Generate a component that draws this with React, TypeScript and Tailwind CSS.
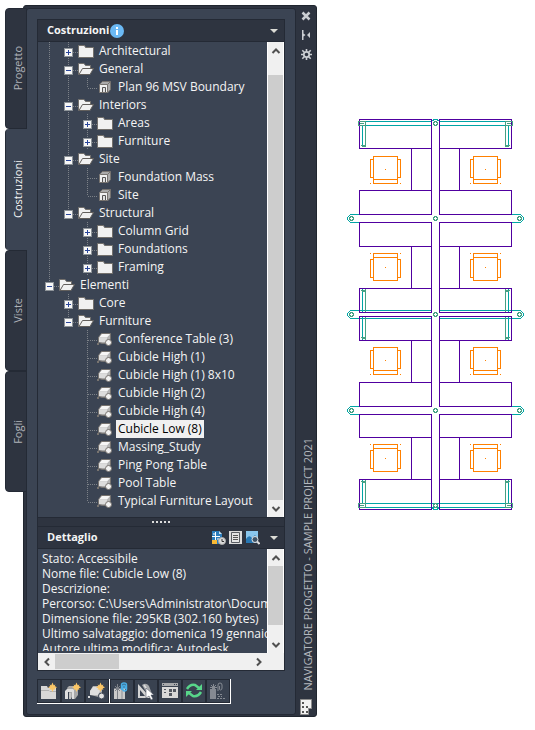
import React from "react";

type Kind = "closed" | "open" | "construct" | "element";
type Gutter = "v" | "+" | "-" | "t" | "l" | " " | "=";

interface RowData {
  gutter: Gutter[];
  kind: Kind;
  label: string;
  selected?: boolean;
}

/* gutter codes: v line, t branch, l last branch, + / - expander on a line, = last open expander */
const rows: RowData[] = [
  { gutter: ["v", "+"], kind: "closed", label: "Architectural" },
  { gutter: ["v", "-"], kind: "open", label: "General" },
  { gutter: ["v", "v", "l"], kind: "construct", label: "Plan 96 MSV Boundary" },
  { gutter: ["v", "-"], kind: "open", label: "Interiors" },
  { gutter: ["v", "v", "+"], kind: "closed", label: "Areas" },
  { gutter: ["v", "v", "+"], kind: "closed", label: "Furniture" },
  { gutter: ["v", "-"], kind: "open", label: "Site" },
  { gutter: ["v", "v", "t"], kind: "construct", label: "Foundation Mass" },
  { gutter: ["v", "v", "l"], kind: "construct", label: "Site" },
  { gutter: ["v", "="], kind: "open", label: "Structural" },
  { gutter: ["v", " ", "+"], kind: "closed", label: "Column Grid" },
  { gutter: ["v", " ", "+"], kind: "closed", label: "Foundations" },
  { gutter: ["v", " ", "+"], kind: "closed", label: "Framing" },
  { gutter: ["="], kind: "open", label: "Elementi" },
  { gutter: [" ", "+"], kind: "closed", label: "Core" },
  { gutter: [" ", "="], kind: "open", label: "Furniture" },
  { gutter: [" ", " ", "t"], kind: "element", label: "Conference Table (3)" },
  { gutter: [" ", " ", "t"], kind: "element", label: "Cubicle High (1)" },
  { gutter: [" ", " ", "t"], kind: "element", label: "Cubicle High (1) 8x10" },
  { gutter: [" ", " ", "t"], kind: "element", label: "Cubicle High (2)" },
  { gutter: [" ", " ", "t"], kind: "element", label: "Cubicle High (4)" },
  { gutter: [" ", " ", "t"], kind: "element", label: "Cubicle Low (8)", selected: true },
  { gutter: [" ", " ", "t"], kind: "element", label: "Massing_Study" },
  { gutter: [" ", " ", "t"], kind: "element", label: "Ping Pong Table" },
  { gutter: [" ", " ", "t"], kind: "element", label: "Pool Table" },
  { gutter: [" ", " ", "l"], kind: "element", label: "Typical Furniture Layout" },
];

function GutterCell({ code, label }: { code: Gutter; label: string }) {
  const down = code === "v" || code === "t" || code === "+" || code === "-";
  const up = down || code === "l" || code === "=";
  const across = code !== "v" && code !== " ";
  const box = code === "+" || code === "-" || code === "=";
  const art = (
    <svg width="19" height="18" viewBox="0 0 19 18" className="block" aria-hidden="true" shapeRendering="crispEdges">
      <g stroke="#7d8288" strokeDasharray="1 1">
        {up && <path d="M9.5 0V10" />}
        {down && <path d="M9.5 10V18" />}
        {across && <path d="M10 10.5H19" />}
      </g>
      {box && (
        <g>
          <rect x="5" y="6" width="9" height="9" fill="#8e9499" />
          <rect x="6" y="7" width="7" height="7" fill="#f7f7f7" />
          <path d="M7 10.5H12" stroke="#2a4699" />
          {code === "+" && <path d="M9.5 8V13" stroke="#2a4699" />}
        </g>
      )}
    </svg>
  );
  return box ? (
    <button type="button" aria-label={"Espandi o comprimi " + label} className="shrink-0">{art}</button>
  ) : (
    <span className="shrink-0">{art}</span>
  );
}

function NodeIcon({ kind }: { kind: Kind }) {
  return (
    <svg width="18" height="18" viewBox="0 0 18 18" className="block shrink-0" aria-hidden="true">
      {kind === "closed" && (
        <path d="M0.500 3.500H6.500L7.500 5.500H15.500V15.500H0.500Z" fill="#f1f1f1" stroke="#73706c" />
      )}
      {kind === "open" && (
        <>
          <path d="M0.500 14.500V3.500H6L7.500 5.500H12.500V9" fill="#f1f1f1" stroke="#73706c" />
          <path d="M1 14.500L4.500 8.500H15.500L12 14.500Z" fill="#f1f1f1" stroke="#625f5c" />
        </>
      )}
      {kind === "construct" && (
        <>
          <path d="M2.500 6.500L5.500 3.500H13.500V11.500L11 14.500Z" fill="#aaa" stroke="#77736f" />
          <path d="M2.500 14.500V7.500Q2.500 6.500 3.500 6.500H10.500V14.500Z" fill="#f0f0f0" stroke="#77736f" />
          <path d="M5.500 14V9.500H8.500V14" fill="#e2e2e2" stroke="#555" />
          <path d="M10.500 6.500L13.500 3.500" stroke="#77736f" />
        </>
      )}
      {kind === "element" && (
        <>
          <path d="M1.500 12.500V7.500L4.500 3.500H13.500V9L10 13Q6 14 1.500 12.500Z" fill="#b5b5b5" stroke="#77736f" />
          <path d="M2 7.500L5 4H13L10 7.500Z" fill="#f6f6f6" />
          <path d="M2 8H10V12H2Z" fill="#dcdcdc" />
          <circle cx="11.500" cy="12.500" r="3" fill="#f2f2f2" stroke="#77736f" />
          <path d="M0 13H2V15H0Z" fill="#77736f" />
        </>
      )}
    </svg>
  );
}

function Chevron({ dir }: { dir: "up" | "down" | "left" | "right" }) {
  const d = {
    up: "M1.500 7L5 3.500L8.500 7",
    down: "M1.500 3L5 6.500L8.500 3",
    left: "M7 1.500L3.500 5L7 8.500",
    right: "M3 1.500L6.500 5L3 8.500",
  }[dir];
  return (
    <svg width="10" height="10" viewBox="0 0 10 10" aria-hidden="true">
      <path d={d} fill="none" stroke="#505050" strokeWidth="2" />
    </svg>
  );
}

function VScroll({ name, children }: { name: string; children: React.ReactNode }) {
  return (
    <div className="flex w-[17px] shrink-0 flex-col border-x border-white bg-[#f0f0f0]">
      <button type="button" aria-label={name + " su"} className="flex h-[17px] shrink-0 items-center justify-center">
        <Chevron dir="up" />
      </button>
      <div className="flex flex-1 flex-col">{children}</div>
      <button type="button" aria-label={name + " giù"} className="flex h-[17px] shrink-0 items-center justify-center">
        <Chevron dir="down" />
      </button>
    </div>
  );
}

function Caret() {
  return (
    <svg width="8" height="4" viewBox="0 0 8 4" aria-hidden="true">
      <path d="M0 0H8L4 4Z" fill="#dcdcd6" />
    </svg>
  );
}

function Star() {
  return <path d="M12.500 0.500L13.700 3.300L15.500 2.500L14.700 4L17 5.200L14.700 6.400L15.500 8L13.700 7.200L12.500 10L11.300 7.200L9.500 8L10.300 6.400L8 5.200L10.300 4L9.500 2.500L11.300 3.300Z" fill="#fbc768" />;
}

const tools: { name: string; art: React.ReactNode }[] = [
  {
    name: "Aggiungi categoria",
    art: (
      <>
        <path d="M1 4H7L8 6H16V17H1Z" fill="#d8d8d8" />
        <path d="M1 8.500H9L10 9.500H16" stroke="#b0b0b0" fill="none" />
        <Star />
      </>
    ),
  },
  {
    name: "Aggiungi costruzione",
    art: (
      <>
        <path d="M3 6L5 4H14V13L11 17H8Z" fill="#a8a8a8" />
        <path d="M1 9L3 7H9L10 8V17H8V10H4V17H1Z" fill="#dedede" />
        <path d="M5 11H7V17H5Z" fill="#c4c4c4" />
        <Star />
      </>
    ),
  },
  {
    name: "Aggiungi elemento",
    art: (
      <>
        <path d="M2 9L5 4H12L14 8V12L11 15L2 13Z" fill="#b4b4b4" />
        <path d="M2 9L5 5H11L12 9L10 13H2Z" fill="#dedede" />
        <circle cx="13.500" cy="14" r="3" fill="#e2e2e2" stroke="#3a4352" />
        <path d="M0 14H2V16H0Z" fill="#dedede" />
        <Star />
      </>
    ),
  },
  {
    name: "Allega riferimento",
    art: (
      <>
        <path d="M1 6H12V17H1Z" fill="#cacaca" />
        <path d="M9 6V17" stroke="#8d9096" />
        <path d="M4.500 2V17M1 6.500H8M2 4L7 9M7 4L2 9" stroke="#7c8087" />
        <path d="M8.500 8V3Q8.500 1 11 1T13.500 3V7Q13.500 9 11.500 9T10 7V4Q10 3 11 3T12 4V7" fill="none" stroke="#49aee6" strokeWidth="1.500" />
      </>
    ),
  },
  {
    name: "Apri disegno",
    art: (
      <>
        <path d="M1 2V16H14Z" fill="#d4d4d4" />
        <path d="M3 8V14H8Z" fill="#3a4352" />
        <path d="M5 3Q9 0 12 4L15 12L12 15Z" fill="#a4a7aa" />
        <path d="M7 3L13 12" stroke="#dcdcdc" strokeWidth="1.500" />
        <path d="M9 6L17 13H14L16 17L14 18L12 14L9 16Z" fill="#fff" stroke="#3a4352" strokeWidth="0.500" />
      </>
    ),
  },
  {
    name: "Mostra dettagli",
    art: (
      <>
        <path d="M1 1H17V4H1Z" fill="#a6a8ab" />
        <path d="M2 2H3V3H2ZM13 2H14V3H13ZM15 2H16V3H15Z" fill="#3a4352" />
        <path d="M1 5H17V16H1Z" fill="#d8d8d8" />
        <path d="M3 7H5V8H3ZM3 10H5V11H3ZM8 7H11V10H8ZM12 7H15V10H12ZM8 11H11V14H8Z" fill="#535861" />
      </>
    ),
  },
  {
    name: "Aggiorna",
    art: (
      <>
        <path d="M2 7Q5 2 10 3L14 6" fill="none" stroke="#58d68a" strokeWidth="2.500" />
        <path d="M17 2V8H11Z" fill="#58d68a" />
        <path d="M16 10Q13 15 8 14L4 11" fill="none" stroke="#58d68a" strokeWidth="2.500" />
        <path d="M1 15V9H7Z" fill="#58d68a" />
      </>
    ),
  },
  {
    name: "Risolvi riferimenti",
    art: (
      <>
        <path d="M1 7H7V17H1Z" fill="#858a92" />
        <path d="M4.500 2V8M1 5.500H8M2 3L7 8M7 3L2 8" stroke="#858a92" />
        <path d="M9 9V3Q9 1 11 1T13 3V6Q13 8 11.500 8T10.500 6V4" fill="none" stroke="#858a92" />
        <path d="M8 12.500H14M9 14.500H13M8 16.500H17" stroke="#858a92" strokeDasharray="2 1" />
      </>
    ),
  },
];

function Tool({ index }: { index: number }) {
  return (
    <button type="button" aria-label={tools[index].name} className="flex size-6 items-center justify-center border border-[#242a35] bg-[#394250]">
      <svg width="18" height="18" viewBox="0 0 18 18" aria-hidden="true">{tools[index].art}</svg>
    </button>
  );
}

const TEAL = "#00a5a5";
const GREEN = "#46a184";

function Chair({ x, y, flip }: { x: number; y: number; flip?: boolean }) {
  return (
    <g transform={flip ? `translate(${x} ${y + 27}) scale(1 -1)` : `translate(${x} ${y})`} stroke="#ff8000">
      <path d="M3.500 0.500H27.500V27.500H3.500ZM3.500 23.500H27.500M3.500 3.500H0.500V21.500H3.500M27.500 3.500H30.500V21.500H27.500" />
      <path d="M15 13.500H16M0 27.500H1M30 27.500H31" />
    </g>
  );
}

/* Open-office plan: x,y are plan units, one unit per pixel */
function Plan() {
  const boxes = [[119, 148], [190, 214], [222, 246], [288, 312], [316, 340], [382, 406], [414, 437], [479, 509]];
  const stems = [[148, 190], [246, 288], [340, 382], [437, 479]];
  return (
    <svg width="180" height="394" viewBox="346 118 180 394" fill="none" shapeRendering="crispEdges" role="img" aria-label="Pianta cubicoli">
      <g stroke={TEAL}>
        <path d="M360 121.500H431M440 121.500H511M360 125.500H431M440 125.500H511" />
        <path d="M360 503.500H511M360 507.500H511" />
        {[[125, 147], [289, 312], [317, 340], [480, 503]].map(([a, b]) => (
          <path key={a} d={`M362.500 ${a}V${b}M508.500 ${a}V${b}`} />
        ))}
        {[218, 314, 410].map((c) => (
          <path key={c} d={`M359 ${c - 3.5}H350.500L347.500 ${c - 0.5}V${c + 1.5}L350.500 ${c + 4.5}H359M512 ${c - 3.5}H520.500L523.500 ${c - 0.5}V${c + 1.5}L520.500 ${c + 4.5}H512`} />
        ))}
        <path d="M359 310.500H431M440 310.500H512M359 318.500H431M440 318.500H512" />
        <path d="M433 119.500H438M432 120.500H434M437 120.500H439M433 509.500H438M432 508.500H434M437 508.500H439" />
      </g>
      <g stroke="#5000a0">
        {boxes.map(([a, b]) => (
          <path key={a} d={`M359.500 ${a + 0.5}H431.500V${b + 0.5}H359.500ZM439.500 ${a + 0.5}H511.500V${b + 0.5}H439.500Z`} />
        ))}
        {stems.map(([a, b]) => (
          <path key={a} d={`M411.500 ${a}V${b}M431.500 ${a}V${b}M439.500 ${a}V${b}M459.500 ${a}V${b}`} />
        ))}
      </g>
      <g stroke={GREEN}>
        {[[351, 218], [435, 218], [519, 218], [351, 314], [435, 314], [519, 314], [351, 410], [435, 410], [519, 410], [435, 123], [435, 505]].map(([x, y]) => (
          <path key={x + "-" + y} d={`M${x - 0.5} ${y - 1.5}H${x + 1.5}L${x + 2.5} ${y + 0.5}L${x + 1.5} ${y + 2.5}H${x - 0.5}L${x - 1.5} ${y + 0.5}Z`} />
        ))}
        {[121, 503].map((y) => (
          <path key={y} d={`M358.500 ${y + 0.5}H365.500V${y + 4.5}H358.500ZM360 ${y + 2.5}H364M505.500 ${y + 0.5}H512.500V${y + 4.5}H505.500ZM507 ${y + 2.5}H511`} />
        ))}
        {[[125, 147], [289, 312], [317, 340], [480, 503]].map(([a, b]) => (
          <path key={a} d={`M365.500 ${a}V${b}M505.500 ${a}V${b}`} />
        ))}
        {[145, 290, 337, 481].map((y) => (
          <path key={y} d={`M361 ${y + 0.5}H366M362 ${y + 1.5}H365M505 ${y + 0.5}H510M506 ${y + 1.5}H509`} />
        ))}
      </g>
      {[370, 470].map((x) => (
        <g key={x}>
          <Chair x={x} y={156} />
          <Chair x={x} y={254} flip />
          <Chair x={x} y={347} />
          <Chair x={x} y={445} flip />
        </g>
      ))}
    </svg>
  );
}

const tabs = ["Progetto", "Costruzioni", "Viste", "Fogli"];
const details = [
  "Stato: Accessibile",
  "Nome file: Cubicle Low (8)",
  "Descrizione:",
  "Percorso: C:\\Users\\Administrator\\Documents",
  "Dimensione file: 295KB (302.160 bytes)",
  "Ultimo salvataggio: domenica 19 gennaio 2020",
  "Autore ultima modifica: Autodesk",
];

export default function App() {
  return (
    <main className="flex min-h-screen items-start bg-white pl-[5px] font-['Open_Sans','Noto_Sans',sans-serif] text-xs text-[#f5f5f5]">
      <div role="tablist" aria-orientation="vertical" className="z-10 mt-2 -mr-1 flex w-[22px] shrink-0 flex-col text-[11px]">
        {tabs.map((t) => {
          const active = t === "Costruzioni";
          return (
            <button
              key={t}
              type="button"
              role="tab"
              aria-selected={active}
              className={
                "flex h-[121px] items-center justify-center rounded-l-sm border-l pl-1 " +
                (active ? "border-[#242a35] bg-[#3b4453] text-[#f5f5f5]" : "border-y border-r border-[#242a35] bg-[#2e3440] text-[#aeb2b8]")
              }
            >
              <span className="rotate-180 [writing-mode:vertical-rl]">{t}</span>
            </button>
          );
        })}
      </div>

      <section className="mt-[5px] flex w-[294px] shrink-0 rounded-[3px] border border-[#20262f] bg-[#2e3440] pt-[2px] pb-px pl-[2px]">
        <div className="flex w-[270px] flex-col rounded-[3px] border border-[#242a35] bg-[#3b4453] p-[10px]">
          <div className="border border-[#242a35]">
            <header className="flex h-[22px] items-center border-b border-[#242a35] bg-[#2e3440] pr-[6px] pl-[9px]">
              <h1 className="text-[11px] font-bold">Costruzioni</h1>
              <svg width="14" height="14" viewBox="0 0 14 14" className="ml-px" aria-hidden="true">
                <circle cx="7" cy="7" r="7" fill="#6bb9f5" />
                <path d="M6 3H8V5H6ZM6 6H8V11H6Z" fill="#fff" />
              </svg>
              <button type="button" aria-label="Menu costruzioni" className="ml-auto"><Caret /></button>
            </header>
            <div className="flex h-[475px]">
              <ul role="tree" className="min-w-0 flex-1 pl-[2px]">
                {rows.map((r, i) => (
                  <li key={i} role="treeitem" aria-selected={!!r.selected} className="flex h-[18px] items-center">
                    {r.gutter.map((g, j) => <GutterCell key={j} code={g} label={r.label} />)}
                    <NodeIcon kind={r.kind} />
                    <span className={"ml-px px-[2px] leading-[18px] whitespace-nowrap " + (r.selected ? "bg-[#f0f0f0] text-black" : "")}>{r.label}</span>
                  </li>
                ))}
              </ul>
              <VScroll name="Scorri albero">
                <div className="mt-4 flex-1 bg-[#cdcdcd]" />
              </VScroll>
            </div>
            <div className="flex h-[10px] items-center justify-center gap-[2px] border-y border-[#242a35] bg-[#2e3440]">
              {[0, 1, 2, 3, 4].map((i) => <span key={i} className="size-[2px] bg-[#dcdcdc]" />)}
            </div>
            <header className="flex h-[22px] items-center border-b border-[#242a35] bg-[#2e3440] pr-[6px] pl-[9px]">
              <h2 className="text-[11px] font-bold">Dettaglio</h2>
              <div className="ml-auto flex items-center gap-[3px]">
                <button type="button" aria-label="Cronologia">
                  <svg width="14" height="14" viewBox="0 0 14 14" aria-hidden="true">
                    <path d="M0 0H7L10 3V13H0Z" fill="#2c7dbb" />
                    <path d="M3.500 1V9M0 5.500H8M1 3H3M5 8H7" stroke="#fff" />
                    <path d="M7 0L10 3H7Z" fill="#cde2f2" />
                    <path d="M0 9H5V13H0Z" fill="#f9b934" />
                    <circle cx="10" cy="10" r="3.500" fill="#dcdcdc" stroke="#aaa" />
                    <path d="M10 8V10.500H12" stroke="#333" fill="none" />
                  </svg>
                </button>
                <button type="button" aria-label="Elenco">
                  <svg width="14" height="14" viewBox="0 0 14 14" aria-hidden="true">
                    <path d="M0 0H13V13H0Z" fill="#dcdcdc" />
                    <path d="M2.500 1.500H10.500V11.500H2.500Z" fill="#e4e4e4" stroke="#585c62" />
                    <path d="M4 4.500H9M4 6.500H9M4 8.500H9" stroke="#555" />
                  </svg>
                </button>
                <button type="button" aria-label="Anteprima">
                  <svg width="14" height="14" viewBox="0 0 14 14" aria-hidden="true">
                    <path d="M0 0H12V12H0Z" fill="#8ac6ec" />
                    <path d="M0 8Q3 3 6 7L9 4L12 8V12H0Z" fill="#2877b2" />
                    <circle cx="9" cy="8.500" r="3" fill="#3f5366" stroke="#e6e6e6" />
                    <path d="M11 10.500L13.500 13" stroke="#dcdcdc" strokeWidth="2" />
                  </svg>
                </button>
                <button type="button" aria-label="Menu dettaglio" className="ml-[7px]"><Caret /></button>
              </div>
            </header>
            <div className="flex h-[104px]">
              <div className="mb-[2px] min-w-0 flex-1 overflow-hidden pt-[2px] pl-1">
                {details.map((d) => <p key={d} className="leading-[15px] whitespace-nowrap">{d}</p>)}
              </div>
              <VScroll name="Scorri dettaglio">
                <div className="mb-[11px] flex-1 bg-[#cdcdcd]" />
              </VScroll>
            </div>
            <div className="flex h-[17px] bg-[#f0f0f0] pr-[17px]">
              <button type="button" aria-label="Scorri a sinistra" className="flex w-[17px] items-center justify-center"><Chevron dir="left" /></button>
              <div className="my-px flex-1"><div className="h-full w-16 bg-[#cdcdcd]" /></div>
              <button type="button" aria-label="Scorri a destra" className="flex w-[17px] items-center justify-center"><Chevron dir="right" /></button>
            </div>
          </div>
          <div role="toolbar" className="mt-2 flex self-start border-r border-b border-white">
            <Tool index={0} />
            <Tool index={1} />
            <Tool index={2} />
            <span className="w-px bg-white" />
            <Tool index={3} />
            <Tool index={4} />
            <Tool index={5} />
            <Tool index={6} />
            <Tool index={7} />
          </div>
        </div>

        <aside className="flex flex-1 flex-col items-center pt-[3px]">
          <button type="button" aria-label="Chiudi">
            <svg width="10" height="10" viewBox="0 0 10 10" aria-hidden="true"><path d="M1.500 1.500L8.500 8.500M8.500 1.500L1.500 8.500" stroke="#cbced2" strokeWidth="2.500" /></svg>
          </button>
          <button type="button" aria-label="Nascondi automaticamente" className="mt-[9px]">
            <svg width="10" height="10" viewBox="0 0 10 10" aria-hidden="true">
              <path d="M1 0H2.500V3.500L4.500 5L2.500 6.500V10H1ZM9 2V8L6 5Z" fill="#cbced2" />
            </svg>
          </button>
          <button type="button" aria-label="Proprietà" className="mt-[9px]">
            <svg width="11" height="11" viewBox="0 0 11 11" aria-hidden="true">
              <circle cx="5.500" cy="5.500" r="2.700" fill="none" stroke="#cbced2" strokeWidth="1.800" />
              <path d="M5.500 0V3M5.500 8V11M0 5.500H3M8 5.500H11M1.300 1.300L3.500 3.500M9.700 1.300L7.500 3.500M1.300 9.700L3.500 7.500M9.700 9.700L7.500 7.500" stroke="#cbced2" strokeWidth="1.600" />
            </svg>
          </button>
          <div className="mt-auto mb-[9px] rotate-180 pr-1 text-[11px] whitespace-nowrap text-[#b4b8be] [writing-mode:vertical-rl]">NAVIGATORE PROGETTO - SAMPLE PROJECT 2021</div>
          <svg width="12" height="16" viewBox="0 0 12 16" aria-hidden="true">
            <path d="M0.500 0.500H11.500V9.500H8.500V15.500H0.500Z" fill="#f1f1f1" stroke="#8c8c8c" />
            <path d="M2 3H4V5H2ZM2 7H4V9H2ZM2 12H4V14H2ZM6 7H8V9H6ZM6 12H8V14H6Z" fill="#555" />
          </svg>
        </aside>
      </section>

      <div className="min-w-0 flex-1 overflow-hidden pt-[118px] pl-[29px]">
        <Plan />
      </div>
    </main>
  );
}
